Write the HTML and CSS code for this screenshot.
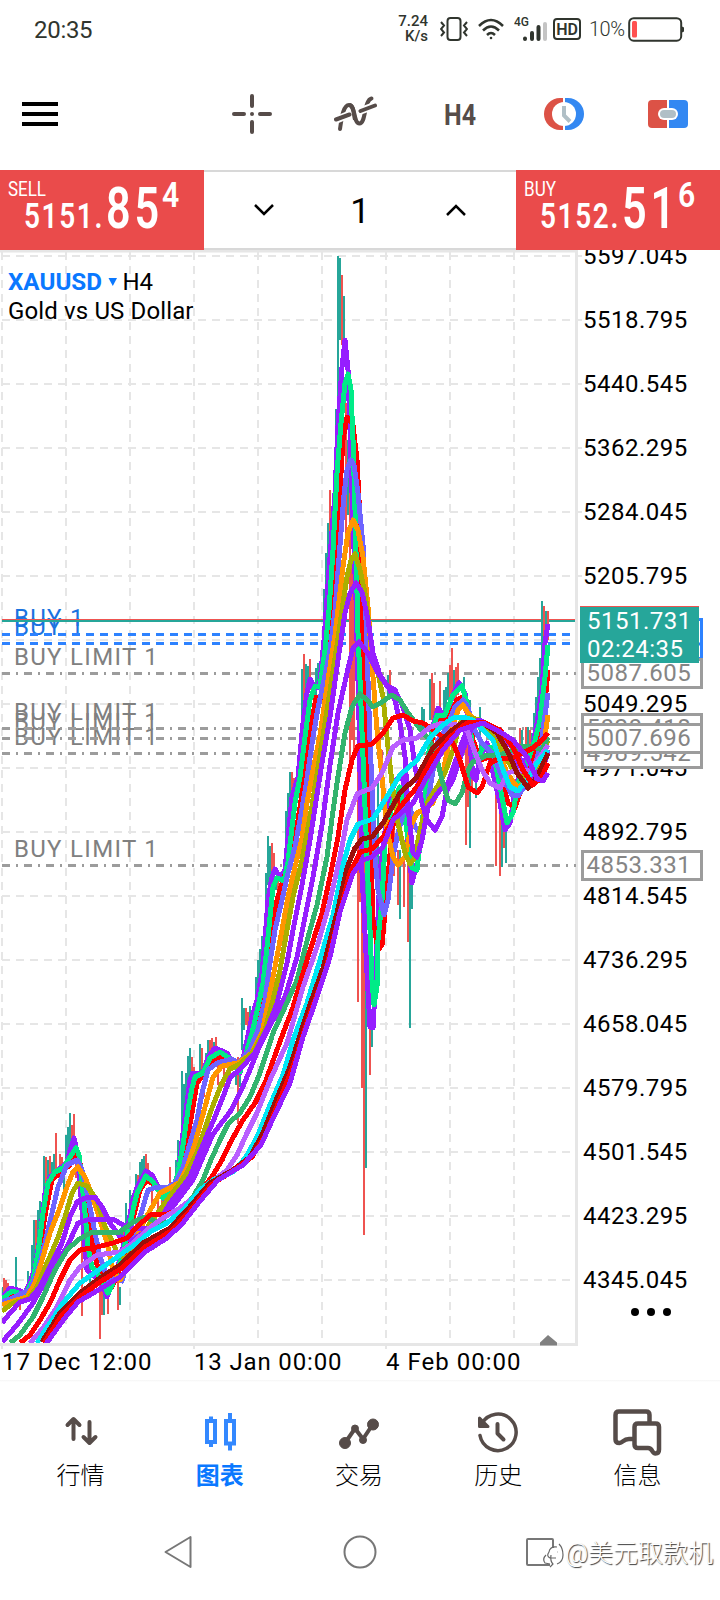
FILE: index.html
```html
<!DOCTYPE html>
<html lang="zh-CN">
<head>
  <meta charset="UTF-8" />
  <meta name="viewport" content="width=device-width, initial-scale=1" />
  <title>XAUUSD H4</title>
  <link rel="stylesheet" href="styles.css">
</head>
<body>
  <div class="status-bar">
    <span class="clock">20:35</span>
    <div class="status-right">
      <span class="speed">7.24<br>K/s</span>
      <svg class="vibrate" width="28" height="26" viewBox="0 0 28 26" fill="none" stroke="#30352e" stroke-width="2">
        <rect x="7.500" y="2" width="13" height="22" rx="3"/>
        <path d="M1 6l3 3.500-3 3.500 3 3.500-3 3.500M27 6l-3 3.500 3 3.500-3 3.500 3 3.500"/>
      </svg>
      <svg class="wifi" width="26" height="22" viewBox="0 0 26 22" fill="none" stroke="#30352e" stroke-width="2.500">
        <path d="M1 8Q13-4 25 8M5 12.500Q13 4.500 21 12.500M9 17Q13 13 17 17"/>
        <circle cx="13" cy="20" r="1.300" fill="#30352e" stroke="none"/>
      </svg>
      <svg class="signal" width="34" height="26" viewBox="0 0 34 26">
        <text x="0" y="10" class="net">4G</text>
        <g stroke="#30352e" stroke-width="4" stroke-linecap="round">
          <path d="M11 22.500v.5M18 17v6M24.500 11v12"/>
          <path d="M31 8v15" stroke="#c4c4c4"/>
        </g>
      </svg>
      <span class="hd">HD</span>
      <span class="percent">10%</span>
      <svg class="battery" width="56" height="25" viewBox="0 0 56 25">
        <rect x="1.200" y="1.200" width="52" height="22.500" rx="4.500" fill="none" stroke="#30352e" stroke-width="2"/>
        <rect x="4" y="4" width="5" height="16.500" rx="1.500" fill="#ff5050"/>
        <path d="M53 9l3 1.500v4l-3 1.500z" fill="#30352e"/>
      </svg>
    </div>
  </div>

  <header class="toolbar">
    <div class="menu">
      <span></span><span></span><span></span>
    </div>
    <div class="tools">
      <div class="tool">
        <svg width="40" height="40" viewBox="0 0 40 40" stroke="#564c49" stroke-width="4" stroke-linecap="round">
          <path d="M20 2v10M20 28v10M2 20h10M28 20h10M20 20h.01"/>
        </svg>
      </div>
      <div class="tool">
        <svg width="44" height="38" viewBox="0 0 44 38" fill="none" stroke-linecap="round">
          <path d="M6 34C7.500 24 9 10 15 10C22 10 19 28.500 25.500 28.500C32 28.500 30 5 37.500 3.500" stroke="#564c49" stroke-width="4"/>
          <path d="M2 25L15 19.500" stroke="#fff" stroke-width="7.500" stroke-linecap="butt"/>
          <path d="M26 16L41 10.500" stroke="#fff" stroke-width="7.500" stroke-linecap="butt"/>
          <path d="M2 24.500L15.500 19.500M26.500 16L41 10.500" stroke="#564c49" stroke-width="4"/>
          <path d="M15.500 10C20 11 19.500 20 21 24.500" stroke="#564c49" stroke-width="4" stroke-linecap="butt"/>
        </svg>
      </div>
      <div class="tool">
        <svg width="36" height="32" viewBox="0 0 36 32">
          <text x="2" y="26.500" class="timeframe" textLength="32" lengthAdjust="spacingAndGlyphs">H4</text>
        </svg>
      </div>
      <div class="tool">
        <svg width="40" height="32" viewBox="0 0 40 32">
          <path d="M19 0h-3a16 16 0 0 0 0 32h3z" fill="#dc5246"/>
          <path d="M21 0h3a16 16 0 0 1 0 32h-3z" fill="#3388f2"/>
          <circle cx="20" cy="16" r="12" fill="#fff"/>
          <path d="M20 8v9.500l6 6" fill="none" stroke="#b0bfc6" stroke-width="4"/>
        </svg>
      </div>
      <div class="tool">
        <svg width="40" height="28" viewBox="0 0 40 28">
          <path d="M19 0H4a4 4 0 0 0-4 4v20a4 4 0 0 0 4 4h15z" fill="#dc5246"/>
          <path d="M21 0h15a4 4 0 0 1 4 4v20a4 4 0 0 1-4 4H21z" fill="#3388f2"/>
          <rect x="10" y="8" width="20" height="12" rx="6" fill="#fff"/>
          <rect x="12" y="10" width="16" height="8" rx="4" fill="#b0bfc6"/>
        </svg>
      </div>
    </div>
  </header>

  <section class="trade">
    <svg class="quote" width="204" height="80" viewBox="0 0 204 80">
      <text x="8" y="26" class="side" textLength="38" lengthAdjust="spacingAndGlyphs">SELL</text>
      <text x="24" y="58" class="price" textLength="80" lengthAdjust="spacingAndGlyphs">5151.</text>
      <text x="106" y="58" class="pips" textLength="57" lengthAdjust="spacingAndGlyphs">85</text>
      <text x="162" y="37" class="price" textLength="19" lengthAdjust="spacingAndGlyphs">4</text>
    </svg>
    <div class="volume">
      <svg width="20" height="12" viewBox="0 0 20 12"><path d="M1 1l9 9 9-9"/></svg>
      <span>1</span>
      <svg width="20" height="12" viewBox="0 0 20 12"><path d="M1 11l9-9 9 9"/></svg>
    </div>
    <svg class="quote" width="204" height="80" viewBox="0 0 204 80">
      <text x="8" y="26" class="side" textLength="32" lengthAdjust="spacingAndGlyphs">BUY</text>
      <text x="24" y="58" class="price" textLength="80" lengthAdjust="spacingAndGlyphs">5152.</text>
      <text x="106" y="58" class="pips" textLength="57" lengthAdjust="spacingAndGlyphs">51</text>
      <text x="162" y="37" class="price" textLength="19" lengthAdjust="spacingAndGlyphs">6</text>
    </svg>
  </section>

  <svg class="chart" width="720" height="1130" viewBox="0 250 720 1130">
    <defs>
      <clipPath id="plot"><rect x="2" y="252" width="574" height="1091"/></clipPath>
    </defs>

    <!-- grid -->
    <g class="grid">
      <path d="M2 256H576M2 320H576M2 384H576M2 448H576M2 512H576M2 576H576M2 640H576M2 704H576M2 768H576M2 832H576M2 896H576M2 960H576M2 1024H576M2 1088H576M2 1152H576M2 1216H576M2 1280H576"/>
      <path d="M2 252V1343M66 252V1343M130 252V1343M194 252V1343M258 252V1343M322 252V1343M386 252V1343M450 252V1343M514 252V1343"/>
    </g>
    <path class="frame" d="M0 251H578M576.500 251V1344.500M0 1344.500H578"/>
    <path class="tick" d="M2 1345V1349M194 1345V1349M386 1345V1349M578 256h4M578 320h4M578 384h4M578 448h4M578 512h4M578 576h4"/>

    <!-- orders -->
    <g class="order-label">
      <text x="14" y="665">BUY LIMIT 1</text>
      <text x="14" y="720">BUY LIMIT 1</text>
      <text x="14" y="730">BUY LIMIT 1</text>
      <text x="14" y="745">BUY LIMIT 1</text>
      <text x="14" y="857">BUY LIMIT 1</text>
      <text x="14" y="626" class="open">BUY 1</text>
      <text x="14" y="635" class="open">BUY 1</text>
    </g>
    <path class="limit" d="M2 673.500H576M2 728.500H576M2 738.500H576M2 753.500H576M2 865.500H576"/>
    <path class="position" d="M2 634.500H576M2 643.500H576"/>
    <path d="M2 619.500H575" stroke="#ef5350"/>
    <path d="M2 621H575" stroke="#26a69a" stroke-width="2"/>

    <g clip-path="url(#plot)" class="series">
      <!-- candles -->
      <path class="up" d="M3 1287V1305M16 1257V1290M28 1271V1290M32 1245V1280M34 1220V1262M38 1210V1250M40 1201V1240M44 1156V1205M48 1160V1180M52 1162V1174M54 1154V1172M64 1175V1195M66 1135V1165M68 1127V1155M70 1113V1150M90 1240V1290M104 1290V1315M120 1287V1305M122 1222V1245M126 1203V1235M130 1190V1235M132 1195V1220M136 1174V1195M140 1162V1182M142 1159V1178M144 1156V1175M164 1190V1205M176 1160V1190M178 1140V1182M180 1148V1170M182 1071V1155M184 1084V1120M186 1073V1115M188 1056V1090M190 1048V1080M200 1044V1080M206 1053V1075M208 1040V1068M214 1042V1065M226 1052V1060M236 1060V1085M240 1073V1087M242 998V1050M244 1008V1030M250 1006V1020M256 977V1010M258 960V1000M260 949V990M262 936V980M264 940V975M266 873V950M268 836V885M270 846V880M276 876V890M286 811V850M288 793V860M290 772V820M296 782V800M298 755V785M300 770V790M302 669V750M306 664V695M308 666V690M316 668V700M318 663V690M324 589V650M326 553V610M328 523V570M332 508V550M336 409V480M338 256V430M340 258V340M344 296V345M348 440V515M366 860V1168M372 1030V1047M378 780V880M388 675V700M390 680V690M400 850V919M410 875V1028M412 880V909M422 707V735M424 709V730M430 679V720M434 695V720M444 690V715M446 687V712M448 673V700M454 670V695M464 677V705M470 700V848M476 770V798M480 707V760M502 780V867M506 820V863M522 730V748M528 727V748M532 733V750M534 713V745M536 697V735M538 677V720M540 658V700M542 601V670M546 611V630"/>
      <path class="down" d="M4 1278V1300M6 1280V1298M8 1283V1296M20 1293V1310M36 1220V1250M46 1157V1185M50 1156V1178M56 1133V1175M60 1154V1170M62 1157V1170M72 1125V1145M74 1114V1140M76 1150V1178M82 1190V1316M100 1275V1339M102 1275V1315M108 1290V1314M118 1270V1310M124 1225V1245M128 1216V1240M138 1175V1190M146 1154V1178M148 1163V1180M152 1182V1210M158 1190V1212M162 1190V1214M170 1167V1195M174 1180V1192M192 1057V1078M194 1067V1080M202 1048V1078M204 1075V1097M210 1040V1062M212 1038V1060M216 1037V1056M218 1065V1085M224 1060V1087M230 1065V1078M238 1057V1124M246 1008V1025M248 1012V1030M272 843V875M274 853V870M278 880V895M292 772V800M294 778V795M304 654V710M310 659V690M312 680V700M330 490V540M334 479V510M342 275V345M346 403V533M350 483V760M352 560V740M354 590V760M358 600V1002M360 700V902M362 820V1088M364 860V1235M370 1025V1075M382 750V810M390 670V692M394 830V876M398 850V905M404 850V907M408 860V942M432 673V720M434 683V715M440 681V712M450 665V700M452 648V695M456 667V700M458 663V695M466 710V845M468 730V807M472 760V790M496 780V866M500 790V876M504 800V848M520 728V745M526 727V748M530 730V745M544 606V650M548 611V640"/>

      <!-- moving averages, fast to slow -->
      <polyline stroke="#961eff" points="2,1298 10,1288 18,1290 25,1293 30,1283 35,1267 40,1237 45,1193 50,1177 60,1168 67,1163 70,1150 74,1138 77,1152 80,1183 83,1223 87,1270 95,1277 100,1277 107,1297 112,1283 117,1270 123,1247 128,1227 132,1203 137,1187 146,1171 152,1175 158,1187 165,1200 170,1197 177,1183 181,1150 184,1125 187,1103 190,1080 193,1073 203,1073 208,1057 215,1048 227,1053 235,1067 240,1073 247,1040 252,1017 257,1000 262,973 265,940 268,900 272,877 275,869 280,878 285,870 288,838 292,797 298,777 303,723 307,693 310,679 315,689 320,682 324,640 330,557 335,493 338,425 342,367 345,340 348,370 350,430 353,523 356,600 359,720 362,873 367,973 370,1027 373,1028 375,990 377,940 380,873 388,807 395,780 403,777 408,843 412,883 417,863 425,823 428,777 432,730 438,708 445,717 455,690 459,683 465,693 468,723 473,777 476,780 480,757 487,743 493,773 500,803 505,830 510,823 515,790 523,763 532,750 537,723 542,690 545,643 548,624"/>
      <polyline stroke="#ff0000" points="2,1301 12,1295 22,1296 29,1291 35,1277 40,1247 46,1210 52,1180 60,1173 70,1165 75,1153 79,1158 84,1185 88,1215 93,1250 98,1268 105,1278 111,1288 117,1277 125,1253 132,1223 140,1190 147,1180 155,1185 164,1197 174,1190 181,1170 187,1140 192,1113 197,1083 203,1075 212,1062 225,1055 238,1067 247,1053 255,1030 262,1000 267,967 272,930 277,900 281,886 287,868 292,850 297,827 303,787 310,733 316,697 320,700 325,675 330,633 335,570 340,490 343,440 347,417 350,420 353,425 357,460 360,520 362,607 364,680 367,757 371,857 373,920 378,950 382,945 387,890 392,830 400,797 405,810 410,837 415,857 422,833 428,770 433,733 440,718 447,722 457,700 463,697 468,713 473,740 480,760 490,757 498,767 508,803 515,808 522,787 530,767 538,740 545,703 548,670"/>
      <polyline stroke="#00eb87" points="2,1299 12,1291 22,1294 28,1290 33,1280 38,1253 43,1213 48,1183 55,1172 63,1168 70,1157 76,1148 79,1155 82,1183 85,1213 88,1247 92,1267 100,1277 108,1293 113,1283 122,1257 130,1223 137,1193 146,1176 153,1182 163,1198 172,1192 178,1173 183,1145 188,1110 192,1088 195,1077 203,1073 210,1058 220,1052 232,1060 240,1072 245,1057 252,1033 258,1007 263,983 267,947 270,917 273,887 277,878 284,881 288,862 292,827 295,803 300,777 305,737 310,700 315,686 320,687 325,650 329,610 333,550 337,473 341,423 345,383 348,374 351,390 353,440 355,510 358,633 360,680 363,757 367,857 370,930 372,980 374,1005 377,987 378,940 382,900 385,843 392,803 400,787 405,817 412,868 417,870 420,843 425,797 430,740 437,715 445,715 453,695 462,686 467,703 472,743 477,760 483,747 492,747 500,787 507,823 513,813 518,783 527,763 535,740 540,720 545,677 548,645"/>
      <polyline stroke="#6e64ff" points="2,1302 13,1298 20,1294 30,1290 38,1270 45,1243 52,1213 58,1187 67,1165 77,1160 82,1170 88,1197 95,1233 100,1257 108,1280 115,1277 122,1281 128,1260 135,1233 143,1207 148,1190 157,1187 167,1188 175,1183 183,1168 190,1143 197,1120 202,1093 208,1070 217,1063 232,1059 238,1063 250,1050 258,1030 265,1000 270,963 275,930 282,900 288,873 295,847 300,820 306,785 313,737 318,708 324,680 330,650 335,610 340,545 344,495 347,470 351,460 354,465 358,493 363,545 366,620 370,740 375,857 378,890 384,915 388,900 393,857 398,833 405,807 410,807 415,827 420,833 425,817 432,777 438,740 447,727 455,707 463,700 468,707 473,727 482,743 492,753 502,777 512,795 518,796 527,783 535,767 542,737 548,693"/>
      <polyline stroke="#ff9600" points="2,1305 13,1301 27,1297 35,1283 42,1260 50,1233 58,1213 67,1187 73,1172 78,1167 85,1177 92,1195 100,1220 107,1243 113,1270 120,1280 127,1267 133,1247 143,1223 152,1207 160,1193 170,1188 180,1182 188,1165 195,1143 205,1107 213,1077 222,1066 238,1063 252,1053 262,1033 268,1003 275,967 282,930 288,897 295,867 302,838 307,803 313,770 320,735 328,680 335,635 343,567 348,533 353,520 358,530 363,557 368,607 371,650 374,690 377,730 382,777 387,830 393,857 398,865 405,857 412,823 417,813 423,810 433,803 442,777 450,737 458,710 463,705 468,713 477,723 487,730 497,747 507,773 517,787 527,783 537,773 543,750 548,715"/>
      <polyline stroke="#aaaf00" points="2,1311 13,1303 28,1299 37,1287 47,1263 57,1240 65,1217 72,1193 78,1183 87,1186 97,1200 105,1227 112,1240 118,1255 127,1258 140,1240 150,1223 160,1210 167,1200 177,1187 187,1173 197,1153 204,1131 212,1108 222,1083 230,1069 240,1064 253,1052 265,1030 273,1000 280,970 287,930 293,897 302,860 307,833 312,806 320,755 328,704 337,645 342,610 347,577 351,560 355,554 360,570 365,593 368,617 372,650 378,673 383,697 387,737 392,783 398,823 405,853 410,864 415,857 420,830 427,803 437,787 445,773 453,750 460,723 467,717 480,720 490,730 500,747 513,770 527,777 538,767 548,740"/>
      <polyline stroke="#961eff" points="2,1323 10,1313 20,1302 30,1299 40,1287 50,1267 62,1243 70,1217 77,1202 85,1198 95,1197 102,1207 110,1223 120,1237 133,1240 147,1230 160,1220 170,1203 180,1190 190,1177 200,1152 208,1133 215,1117 223,1097 230,1078 240,1069 255,1053 268,1027 277,1003 287,963 293,930 302,885 310,840 316,801 322,763 330,717 338,660 345,613 350,593 356,583 362,592 368,620 373,653 380,675 388,687 395,700 400,723 405,757 408,807 413,853 417,857 422,840 428,807 440,790 448,783 457,757 463,740 470,723 480,720 493,727 507,750 520,770 533,777 543,767 548,753"/>
      <polyline stroke="#961eff" points="2,1342 17,1325 33,1303 50,1273 67,1247 78,1223 90,1219 113,1219 123,1225 137,1229 153,1228 167,1215 180,1197 193,1180 203,1157 213,1134 230,1112 240,1093 250,1070 260,1045 273,1020 285,997 297,957 305,917 313,877 322,825 330,765 338,713 347,673 353,648 359,642 367,652 378,673 387,686 395,690 403,707 410,730 415,767 422,803 427,820 435,830 442,817 447,790 453,780 463,750 472,727 483,723 500,733 517,753 530,777 540,777 548,750"/>
      <polyline stroke="#32b46e" points="10,1343 20,1335 33,1317 43,1297 55,1270 67,1250 78,1240 90,1233 103,1232 120,1232 133,1222 145,1217 157,1222 167,1223 180,1213 193,1197 203,1180 211,1160 220,1140 228,1124 240,1113 250,1097 260,1073 273,1033 285,1007 297,980 307,941 317,905 327,857 332,818 337,783 345,733 352,707 360,694 367,700 373,707 382,702 392,695 400,700 408,713 417,725 427,737 435,750 442,780 448,800 455,804 462,793 468,770 473,762 487,755 500,755 513,750 523,746 533,747 542,750 548,737"/>
      <polyline stroke="#ff0000" points="20,1343 30,1335 40,1320 50,1303 60,1280 70,1260 80,1250 97,1247 113,1243 127,1238 137,1227 150,1215 167,1214 183,1208 200,1193 213,1175 222,1160 230,1143 243,1120 255,1103 265,1083 278,1047 293,1007 307,960 322,913 330,877 338,837 345,790 352,760 358,746 372,744 383,733 393,718 403,715 413,721 423,723 433,730 443,737 453,743 460,760 468,787 477,793 482,787 490,763 500,758 512,758 523,753 533,748 542,740 548,733"/>
      <polyline stroke="#b95fff" points="30,1343 43,1328 57,1307 70,1280 80,1267 97,1255 120,1252 133,1243 147,1230 163,1218 180,1208 193,1198 210,1183 227,1170 237,1155 247,1133 257,1113 270,1080 287,1043 303,987 317,947 329,905 340,857 347,820 357,794 372,788 382,773 393,747 403,740 417,738 430,727 443,723 457,725 467,730 473,747 482,770 490,783 500,788 508,773 517,770 530,770 540,757 548,745"/>
      <polyline stroke="#00e6f5" points="37,1343 50,1323 63,1303 80,1283 103,1267 120,1255 137,1243 150,1232 167,1223 183,1210 200,1190 213,1180 233,1172 246,1157 257,1137 270,1105 283,1075 293,1040 307,1003 320,960 333,915 343,865 350,840 358,824 373,819 385,800 400,775 417,760 430,738 443,725 453,718 463,717 473,720 483,730 493,740 502,767 510,787 518,791 527,780 537,763 548,750"/>
      <polyline stroke="#9b0f0a" points="42,1342 60,1313 80,1293 100,1278 120,1265 143,1243 170,1228 187,1210 210,1183 233,1170 250,1157 263,1133 277,1098 290,1067 307,1013 323,968 337,913 347,868 355,848 362,839 372,837 383,823 400,793 417,777 433,748 450,732 463,722 483,723 497,733 507,750 517,773 528,788 537,777 548,753"/>
      <polyline stroke="#ff0000" points="44,1343 62,1315 80,1297 100,1282 122,1268 145,1247 171,1231 188,1213 211,1185 234,1170 252,1157 266,1134 280,1099 293,1067 308,1019 325,973 338,920 350,873 360,852 372,849 383,837 400,807 417,787 433,757 450,737 467,723 483,722 500,730 513,747 523,770 533,785 542,777 548,763"/>
      <polyline stroke="#961eff" points="46,1344 64,1319 78,1302 100,1289 120,1277 145,1252 167,1238 182,1224 200,1201 218,1180 243,1165 261,1145 270,1125 290,1083 303,1037 317,997 330,957 340,912 353,873 363,860 372,857 383,847 393,820 413,803 427,777 443,750 460,730 483,723 500,732 513,740 527,757 537,779 543,781 548,773"/>
    </g>

    <path d="M540 1345.500v-3l8-7.500 9 7.500v3z" fill="#808080"/>

    <text x="8" y="290" class="symbol" textLength="94" lengthAdjust="spacingAndGlyphs">XAUUSD</text>
    <path d="M108.500 278h8.500l-4.200 8z" fill="#0a78ff"/>
    <text x="122.500" y="290" class="title">H4</text>
    <text x="8" y="319" class="title" textLength="185.500">Gold vs US Dollar</text>

    <!-- price scale -->
    <g class="scale">
      <text x="583" y="264">5597.045</text>
      <text x="583" y="328">5518.795</text>
      <text x="583" y="392">5440.545</text>
      <text x="583" y="456">5362.295</text>
      <text x="583" y="520">5284.045</text>
      <text x="583" y="584">5205.795</text>
      <text x="583" y="712">5049.295</text>
      <text x="583" y="776">4971.045</text>
      <text x="583" y="840">4892.795</text>
      <text x="583" y="904">4814.545</text>
      <text x="583" y="968">4736.295</text>
      <text x="583" y="1032">4658.045</text>
      <text x="583" y="1096">4579.795</text>
      <text x="583" y="1160">4501.545</text>
      <text x="583" y="1224">4423.295</text>
      <text x="583" y="1288">4345.045</text>
    </g>
    <g class="tag">
      <rect class="open" x="582.500" y="619.500" width="119" height="39"/>
      <path class="open" d="M698 644h4"/>
      <rect x="582.500" y="659.500" width="119" height="28"/>
      <text x="586.500" y="681">5087.605</text>
      <rect x="582.500" y="714.500" width="119" height="28"/>
      <text x="586.500" y="736">5020.418</text>
      <rect x="582.500" y="739.500" width="119" height="28"/>
      <text x="586.500" y="761">4989.542</text>
      <rect x="582.500" y="724.500" width="119" height="28"/>
      <text x="586.500" y="746">5007.696</text>
      <rect x="582.500" y="851.500" width="119" height="28"/>
      <text x="586.500" y="873">4853.331</text>
    </g>
    <rect x="580" y="607" width="119" height="56" fill="#26a69a"/>
    <path d="M580 606.500h119" stroke="#ef5350"/>
    <g class="last">
      <text x="587" y="629">5151.731</text>
      <text x="587" y="657">02:24:35</text>
    </g>

    <g class="scale">
      <text x="2" y="1370" textLength="150">17 Dec 12:00</text>
      <text x="194" y="1370" textLength="148">13 Jan 00:00</text>
      <text x="386" y="1370" textLength="135">4 Feb 00:00</text>
    </g>
    <g fill="#000">
      <circle cx="635" cy="1312" r="4"/>
      <circle cx="651" cy="1312" r="4"/>
      <circle cx="667" cy="1312" r="4"/>
    </g>
  </svg>

  <nav class="tabs">
    <div class="tab">
      <svg width="48" height="48" viewBox="0 0 48 48" fill="none" stroke="#564c49" stroke-width="4" stroke-linecap="round" stroke-linejoin="round">
        <path d="M16.500 31V12M10.500 17l6-6 6 6M32.500 14v19M26.500 29l6 6 6-6"/>
      </svg>
      <span>行情</span>
    </div>
    <div class="tab active">
      <svg width="48" height="48" viewBox="0 0 48 48" fill="none" stroke="#3388ff" stroke-width="4">
        <path d="M11 13h8v21h-8zM15 8.500V13M15 34v5M30 13h8v22.500h-8zM34 5v8M34 35v7.500"/>
      </svg>
      <span>图表</span>
    </div>
    <div class="tab">
      <svg width="48" height="48" viewBox="0 0 48 48" fill="#564c49" stroke="#564c49">
        <path d="M10 35L20 20.500L28 31L38 16" fill="none" stroke-width="4"/>
        <circle cx="10" cy="35" r="5.500"/><circle cx="20" cy="20.500" r="3.500"/><circle cx="28" cy="32" r="3.500"/><circle cx="38" cy="16.500" r="5.500"/>
      </svg>
      <span>交易</span>
    </div>
    <div class="tab">
      <svg width="48" height="48" viewBox="0 0 48 48" fill="none" stroke="#564c49" stroke-width="3.500" stroke-linecap="round" stroke-linejoin="round">
        <path d="M6 27.500A18.200 18.200 0 1 0 8 15.500"/>
        <path d="M5.500 10v8.500H14z" fill="#564c49" stroke-width="3"/>
        <path d="M23.500 16v9.500l6 6" stroke-width="4"/>
      </svg>
      <span>历史</span>
    </div>
    <div class="tab">
      <svg width="50" height="48" viewBox="0 0 50 48" fill="none" stroke="#564c49" stroke-width="4.500" stroke-linejoin="round">
        <path d="M21 31H17C11 31 11 35 7.500 35Q3.500 35 3.500 31.500V7Q3.500 3.500 7 3.500H34Q37.500 3.500 37.500 7V15"/>
        <path d="M26 15.500H43.500Q47 15.500 47 19V41.500Q47 45.500 43.500 45.500C39.500 45.500 41 40 36 40H26Q22.500 40 22.500 36.500V19Q22.500 15.500 26 15.500Z"/>
      </svg>
      <span>信息</span>
    </div>
  </nav>

  <footer class="system-nav">
    <svg width="32" height="34" viewBox="0 0 32 34"><path d="M2.500 17L27.500 2v30z"/></svg>
    <svg width="34" height="34" viewBox="0 0 34 34"><circle cx="17" cy="17" r="15.500"/></svg>
    <svg width="30" height="30" viewBox="0 0 30 30"><rect x="2" y="2" width="26" height="26" rx="1"/></svg>
    <div class="watermark">
      <svg width="24" height="28" viewBox="0 0 24 28">
        <path d="M9 8h9q4 2 4 8t-7 10H9z" fill="#fff" stroke="none"/>
        <path d="M18 4q4 4 4 11t-6 9M5 15q-4 4-1 8l5 1M16 7q-7-1-8 5q-3 4 1 6h6M10 15q-1 6 2 9l-3 3M16 12h.5"/>
      </svg>
      <span>@美元取款机</span>
    </div>
  </footer>
</body>
</html>
```
FILE: styles.css
```css
body {
  margin: 0;
  width: 720px;
  height: 1600px;
  overflow: hidden;
  background-color: #fff;
  font-family: Roboto, "Noto Sans CJK SC", sans-serif;
  color: #000;
}
svg {
  display: block;
  flex-shrink: 0;
}

/* status bar */
.status-bar {
  display: flex;
  justify-content: space-between;
  align-items: center;
  height: 58px;
  padding: 0 36px 0 34px;
  box-sizing: border-box;
  color: #30352e;
}
.clock {
  font-size: 24px;
  letter-spacing: -0.3px;
  padding-top: 2px;
}
.status-right {
  display: flex;
  align-items: center;
}
.speed {
  width: 30px;
  font-size: 15px;
  line-height: 15px;
  font-weight: 500;
  text-align: right;
  white-space: nowrap;
}
.vibrate {
  margin-left: 12px;
}
.wifi {
  margin-left: 10px;
}
.signal {
  margin-left: 10px;
}
.net {
  font-size: 12px;
  font-weight: 500;
  fill: #30352e;
}
.hd {
  width: 24px;
  height: 18px;
  margin-left: 5px;
  border: 2px solid #30352e;
  border-radius: 4px;
  font-size: 16px;
  line-height: 19px;
  font-weight: 600;
  text-align: center;
}
.percent {
  width: 39px;
  margin-left: 8px;
  font-size: 20px;
  font-weight: 300;
  letter-spacing: -0.5px;
}

/* toolbar */
.toolbar {
  display: flex;
  align-items: center;
  height: 112px;
}
.menu {
  display: flex;
  flex-direction: column;
  gap: 6px;
  width: 36px;
  margin: 0 142px 0 22px;
}
.menu span {
  height: 4px;
  background-color: #000;
}
.tools {
  display: flex;
}
.tool {
  display: flex;
  justify-content: center;
  align-items: center;
  width: 104px;
}
.timeframe {
  font-size: 29px;
  font-weight: 700;
  fill: #564c49;
}

/* one click trading */
.trade {
  display: flex;
  height: 80px;
}
.quote {
  background-color: #ea4b4b;
  fill: #fff;
}
.side {
  font-size: 20px;
}
.price {
  font-size: 34.500px;
  font-weight: 600;
  letter-spacing: 2px;
}
.pips {
  font-size: 56.500px;
  font-weight: 600;
  letter-spacing: 5px;
}
.volume {
  display: flex;
  justify-content: space-between;
  align-items: center;
  flex: 1;
  padding: 0 50px;
  border-top: 2px solid #d8d8d8;
  border-bottom: 2px solid #d8d8d8;
  box-sizing: border-box;
}
.volume span {
  font-size: 35px;
  padding-top: 3px;
}
.volume path {
  fill: none;
  stroke: #000;
  stroke-width: 2.500;
}

/* chart */
.grid {
  stroke: #e6e6e6;
  stroke-width: 2;
  stroke-dasharray: 8 6;
}
.frame {
  fill: none;
  stroke: #e6e6e6;
  stroke-width: 3;
}
.tick {
  stroke: #e6e6e6;
  stroke-width: 2;
}
.order-label text {
  font-size: 24px;
  letter-spacing: 1.3px;
  fill: #808080;
}
.order-label .open {
  fill: #1a73e0;
}
.limit {
  stroke: #9c9c9c;
  stroke-width: 3;
  stroke-dasharray: 8 6 2 6;
}
.position {
  stroke: #2d82ff;
  stroke-width: 3;
  stroke-dasharray: 8 6;
}
.series {
  fill: none;
  shape-rendering: crispEdges;
}
.series path {
  stroke-width: 2;
}
.series polyline {
  stroke-width: 5;
  stroke-linejoin: round;
}
.up {
  stroke: #26a69a;
}
.down {
  stroke: #ef5350;
}
.symbol {
  font-size: 24px;
  font-weight: 700;
  fill: #0a78ff;
}
.title {
  font-size: 24px;
}
.scale text, .tag text, .last text {
  font-size: 24px;
  letter-spacing: 0.5px;
}
.tag rect, .tag path {
  fill: #fff;
  stroke: #9c9c9c;
  stroke-width: 3;
}
.tag .open {
  stroke: #2d82ff;
}
.tag text {
  fill: #858585;
}
.last text {
  fill: #fff;
}

/* bottom tabs */
.tabs {
  display: flex;
  height: 126px;
  padding: 0 13px 0 11px;
  background: linear-gradient(#f5f5f5, #fff 2px);
}
.tab {
  display: flex;
  flex-direction: column;
  align-items: center;
  flex: 1;
  padding-top: 28px;
  font-size: 24px;
  line-height: 36px;
  font-weight: 300;
}
.tab svg {
  margin-bottom: 2px;
}
.tab.active {
  color: #0a78ff;
  font-weight: 700;
}

.system-nav {
  position: relative;
  display: flex;
  justify-content: space-between;
  align-items: center;
  height: 91px;
  padding: 0 165px 0 163px;
}
.system-nav svg {
  fill: none;
  stroke: #777;
  stroke-width: 2;
  stroke-linejoin: round;
}
.watermark {
  position: absolute;
  right: 7px;
  top: 31px;
  display: flex;
  align-items: center;
  font-size: 25px;
  line-height: 34px;
  font-weight: 300;
  color: #fff;
  text-shadow: 1px 1px 1px #333;
}
.system-nav .watermark svg {
  stroke: #666;
  stroke-width: 1.200;
}
```
